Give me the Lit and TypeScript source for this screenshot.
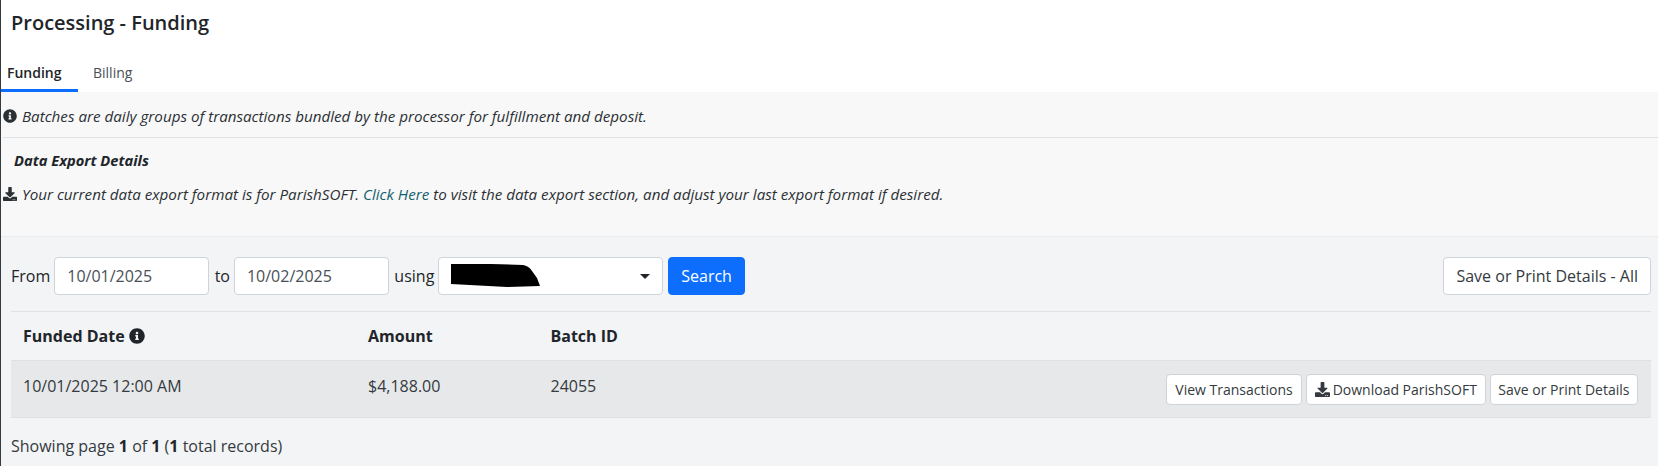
import { LitElement, css, html, svg } from 'lit';
import { customElement } from 'lit/decorators.js';

const infoIcon = svg`<path d="M256 8C119 8 8 119 8 256s111 248 248 248 248-111 248-248S393 8 256 8zm0 110c23 0 42 19 42 42s-19 42-42 42-42-19-42-42 19-42 42-42zm56 254c0 7-5 12-12 12h-88c-7 0-12-5-12-12v-24c0-7 5-12 12-12h12v-64h-12c-7 0-12-5-12-12v-24c0-7 5-12 12-12h64c7 0 12 5 12 12v100h12c7 0 12 5 12 12v24z"/>`;
const downloadIcon = svg`<path d="M216 0h80c13 0 24 11 24 24v168h88c18 0 27 21 14 34L270 378c-8 8-20 8-28 0L90 226c-13-13-4-34 14-34h88V24c0-13 11-24 24-24zm296 376v112c0 13-11 24-24 24H24c-13 0-24-11-24-24V376c0-13 11-24 24-24h147l49 49c20 20 52 20 72 0l49-49h147c13 0 24 11 24 24zm-124 88c0-11-9-20-20-20s-20 9-20 20 9 20 20 20 20-9 20-20zm64 0c0-11-9-20-20-20s-20 9-20 20 9 20 20 20 20-9 20-20z"/>`;

@customElement('app-root')
export class AppRoot extends LitElement {
  static styles = css`
    :host {
      display: block;
      width: 1658px;
      height: 466px;
      overflow: hidden;
      box-sizing: border-box;
      border-left: 1px solid #343a40;
      font-family: 'Open Sans', sans-serif;
      font-size: 16px;
      color: #212529;
      background: #fff;
    }
    .icon { fill: currentColor; flex: none; }
    h1 {
      margin: 0;
      height: 49px;
      padding: 8px 0 0 10px;
      box-sizing: border-box;
      font-size: 20px;
      line-height: 30px;
      font-weight: 600;
    }
    .tabs { display: flex; height: 43px; font-size: 14px; }
    .tab { padding: 0 0 0 6px; line-height: 48px; color: #495057; box-sizing: border-box; }
    .tab.active { width: 77px; font-weight: 600; color: #212529; border-bottom: 3px solid #0d6efd; }
    .tab.billing { padding-left: 15px; }
    .notice { background: #f8f8f8; height: 144px; font-size: 15.2px; font-style: italic; padding-left: 2px; color: #2b3035; }
    .batches { height: 46px; display: flex; align-items: center; gap: 5px; border-bottom: 1px solid #dee2e6; padding-top: 3px; box-sizing: border-box; }
    .export-title { font-weight: 700; font-size: 14.7px; margin: 12px 0 0 11px; line-height: 20px; color: #212529; }
    .export { display: flex; align-items: center; gap: 5px; margin-top: 14px; line-height: 20px; }
    .export a { color: #14606e; text-decoration: none; }
    .main { background: #f3f4f6; height: 230px; border-top: 1px solid #e9ecef; padding: 20px 7px 0 10px; }
    .filters { display: flex; align-items: center; height: 38px; padding-bottom: 16px; border-bottom: 1px solid #dee2e6; }
    .filters label { line-height: 38px; margin: 0 4px 0 5.4px; }
    .filters label.first { margin-left: 0; }
    .filters label.last-label { margin-right: 3.4px; }
    .field {
      box-sizing: border-box;
      height: 38px;
      width: 155px;
      padding: 0 12px;
      border: 1px solid #ced4da;
      border-radius: 4px;
      background: #fff;
      color: #495057;
      display: flex;
      align-items: center;
    }
    .select { width: 225px; padding: 0 12px; justify-content: space-between; }
    .redacted { width: 90px; height: 24px; fill: #000; margin: 0 0 3px 0; }
    .caret { border: 5px solid transparent; border-top-color: #212529; border-bottom: 0; }
    .btn {
      box-sizing: border-box;
      border: 1px solid #ced4da;
      border-radius: 4px;
      background: #fff;
      color: #343a40;
      font: inherit;
      height: 38px;
      padding: 0 12px;
      display: inline-flex;
      align-items: center;
      gap: 3px;
      white-space: nowrap;
    }
    .btn.primary { background: #0d6efd; border-color: #0d6efd; color: #fff; width: 77px; margin-left: 5.4px; justify-content: center; }
    .spacer { flex: 1; }
    .btn.sm { height: 31px; font-size: 14px; padding: 0 8px; }
    .btn.sm:last-child { padding: 0 7.5px; }
    .row, .head { display: grid; grid-template-columns: 345px 182.5px 1fr; padding-left: 12px; align-items: center; }
    .head { height: 48px; font-weight: 700; color: #212529; }
    .funded { display: flex; align-items: center; gap: 4px; }
    .row { height: 58px; box-sizing: border-box; background: #e7e8ea; border-top: 1px solid #dee2e6; border-bottom: 1px solid #dee2e6; color: #343a40; }
    .cell { padding-bottom: 6px; }
    .last { display: flex; align-items: center; justify-content: space-between; }
    .actions { display: flex; justify-content: flex-end; gap: 4px; padding-right: 13px; }
    .pager { margin-top: 16px; line-height: 24px; color: #343a40; }
    .pager b { color: #212529; }
  `;

  render() {
    return html`
      <h1>Processing - Funding</h1>
      <div class="tabs">
        <div class="tab active">Funding</div>
        <div class="tab billing">Billing</div>
      </div>
      <div class="notice">
        <div class="batches">
          <svg class="icon" width="14" height="14" viewBox="0 0 512 512">${infoIcon}</svg>
          <span>Batches are daily groups of transactions bundled by the processor for fulfillment and deposit.</span>
        </div>
        <div class="export-title">Data Export Details</div>
        <div class="export">
          <svg class="icon" width="14" height="14" viewBox="0 0 512 512">${downloadIcon}</svg>
          <span>Your current data export format is for ParishSOFT. <a href="#">Click Here</a> to visit the data export section, and adjust your last export format if desired.</span>
        </div>
      </div>
      <div class="main">
        <div class="filters">
          <label class="first">From</label>
          <div class="field">10/01/2025</div>
          <label>to</label>
          <div class="field">10/02/2025</div>
          <label class="last-label">using</label>
          <div class="field select">
            <svg class="redacted" viewBox="0 0 90 24"><path d="M0 1 L40 1 L72 2 Q78 3 81 8 L86 15 L89 23 L56 24 L0 21 Z"/></svg>
            <span class="caret"></span>
          </div>
          <button class="btn primary">Search</button>
          <span class="spacer"></span>
          <button class="btn">Save or Print Details - All</button>
        </div>
        <div class="head">
          <div class="funded">Funded Date <svg class="icon" width="16" height="16" viewBox="0 0 512 512">${infoIcon}</svg></div>
          <div>Amount</div>
          <div>Batch ID</div>
        </div>
        <div class="row">
          <div class="cell">10/01/2025 12:00 AM</div>
          <div class="cell">$4,188.00</div>
          <div class="last">
            <span class="cell">24055</span>
            <div class="actions">
              <button class="btn sm">View Transactions</button>
              <button class="btn sm"><svg class="icon" width="15" height="15" viewBox="0 0 512 512">${downloadIcon}</svg>Download ParishSOFT</button>
              <button class="btn sm">Save or Print Details</button>
            </div>
          </div>
        </div>
        <div class="pager">Showing page <b>1</b> of <b>1</b> (<b>1</b> total records)</div>
      </div>
    `;
  }
}
